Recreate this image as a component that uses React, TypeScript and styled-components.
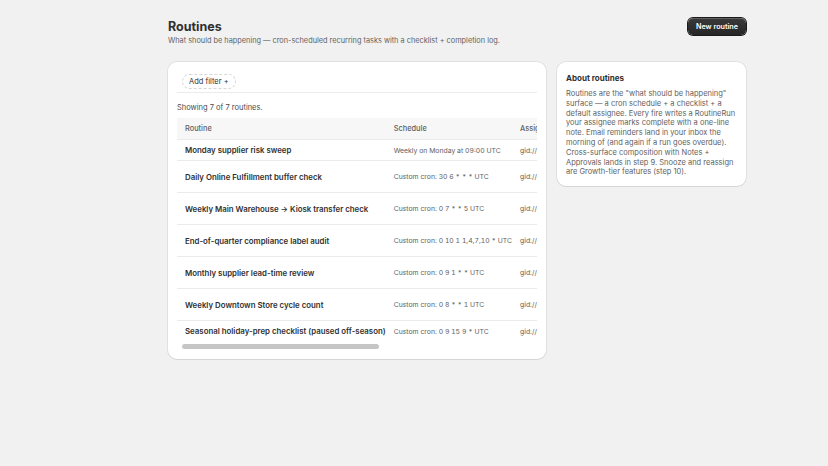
import React from "react"
import styled, { createGlobalStyle } from "styled-components"

const GlobalStyle = createGlobalStyle`
  body {
    margin: 0;
    background: #f1f1f1;
    font-family: Inter, "Noto Sans", sans-serif;
    color: #303030;
  }
`

const Shell = styled.div`
  padding: 18px 0 40px 86px;
`

const Page = styled.div`
  max-width: 578px;
  margin: 0 auto;
`

const Header = styled.header`
  display: flex;
  justify-content: space-between;
  align-items: flex-start;
  margin-bottom: 16px;
`

const Title = styled.h1`
  margin: 0;
  font-size: 12.5px;
  line-height: 18px;
  font-weight: 700;
  color: #303030;
`

const Subtitle = styled.p`
  margin: 0;
  font-size: 7.35px;
  line-height: 10px;
  color: #616161;
`

const PrimaryButton = styled.button`
  height: 17px;
  padding: 0 8px;
  border: none;
  border-radius: 5px;
  background: linear-gradient(#3a3a3a, #262626);
  box-shadow: 0 0 0 1px #1a1a1a, inset 0 1px 0 rgba(255, 255, 255, 0.2);
  color: #fff;
  font-family: inherit;
  font-size: 7.2px;
  font-weight: 600;
  cursor: pointer;
`

const Layout = styled.div`
  display: grid;
  grid-template-columns: minmax(0, 2fr) minmax(0, 1fr);
  gap: 11px;
  align-items: start;
`

const Card = styled.section`
  min-width: 0;
  background: #fff;
  border-radius: 9px;
  box-shadow: 0 0 0 1px rgba(0, 0, 0, 0.06), 0 1px 1px rgba(0, 0, 0, 0.06);
  padding: 9px;
`

const FilterBar = styled.div`
  display: flex;
  align-items: center;
  padding: 3px 5px;
  border-bottom: 1px solid #ebebeb;
`

const AddFilter = styled.button`
  height: 15px;
  padding: 0 6px;
  border: 1px dashed #d6d6d6;
  border-radius: 8px;
  background: #fff;
  font-family: inherit;
  font-size: 7.5px;
  color: #303030;
`

const Count = styled.p`
  margin: 10px 0 5px;
  font-size: 7.5px;
  line-height: 10px;
  color: #4a4a4a;
`

const TableWrap = styled.div`
  overflow: hidden;
`

const Table = styled.table`
  border-collapse: collapse;
  white-space: nowrap;
  font-size: 6.85px;
  font-variant-numeric: tabular-nums;
`

const Th = styled.th`
  height: 21px;
  padding: 0 4px;
  background: #f7f7f7;
  text-align: left;
  font-size: 7.4px;
  font-weight: 500;
  color: #616161;
  border-bottom: 1px solid #ebebeb;
  &:first-child {
    padding-left: 8px;
  }
`

const Row = styled.tr<{ $tall?: boolean; $last?: boolean }>`
  height: ${(p) => (p.$tall ? 32 : 21)}px;
  border-bottom: ${(p) => (p.$last ? "none" : "1px solid #ebebeb")};
`

const NameCell = styled.td`
  padding: 0 4px 0 8px;
  font-size: 7.85px;
  font-weight: 600;
  font-variant-numeric: normal;
  color: #303030;
`

const Cell = styled.td`
  padding: 0 4px;
  color: #616161;
`

const ScrollThumb = styled.div`
  width: 197px;
  height: 5px;
  margin: 2px 0 1px 5px;
  border-radius: 3px;
  background: #c6c6c6;
`

const SideTitle = styled.h2`
  margin: 1px 0 0;
  font-size: 8px;
  line-height: 12px;
  font-weight: 700;
  color: #303030;
`

const SideText = styled.p`
  margin: 5px 0 0;
  font-size: 7.5px;
  line-height: 9.8px;
  color: #616161;
`

interface Routine {
  name: string
  schedule: string
  assignee: string
  checklist: number
  next: string
}

const routines: Routine[] = [
  { name: "Monday supplier risk sweep", schedule: "Weekly on Monday at 09:00 UTC", assignee: "gid://shopify/StaffMember/1", checklist: 4, next: "Mon 09:00" },
  { name: "Daily Online Fulfillment buffer check", schedule: "Custom cron: 30 6 * * * UTC", assignee: "gid://shopify/StaffMember/2", checklist: 3, next: "Tomorrow 06:30" },
  { name: "Weekly Main Warehouse → Kiosk transfer check", schedule: "Custom cron: 0 7 * * 5 UTC", assignee: "gid://shopify/StaffMember/3", checklist: 5, next: "Fri 07:00" },
  { name: "End-of-quarter compliance label audit", schedule: "Custom cron: 0 10 1 1,4,7,10 * UTC", assignee: "gid://shopify/StaffMember/1", checklist: 6, next: "Oct 1 10:00" },
  { name: "Monthly supplier lead-time review", schedule: "Custom cron: 0 9 1 * * UTC", assignee: "gid://shopify/StaffMember/4", checklist: 3, next: "1st 09:00" },
  { name: "Weekly Downtown Store cycle count", schedule: "Custom cron: 0 8 * * 1 UTC", assignee: "gid://shopify/StaffMember/5", checklist: 4, next: "Mon 08:00" },
  { name: "Seasonal holiday-prep checklist (paused off-season)", schedule: "Custom cron: 0 9 15 9 * UTC", assignee: "gid://shopify/StaffMember/2", checklist: 8, next: "Paused" },
]

const App = () => {
  return (
    <Shell>
      <GlobalStyle />
      <Page>
        <Header>
          <div>
            <Title>Routines</Title>
            <Subtitle>What should be happening — cron-scheduled recurring tasks with a checklist + completion log.</Subtitle>
          </div>
          <PrimaryButton>New routine</PrimaryButton>
        </Header>
        <Layout>
          <Card>
            <FilterBar>
              <AddFilter>Add filter +</AddFilter>
            </FilterBar>
            <Count>Showing 7 of 7 routines.</Count>
            <TableWrap>
              <Table>
                <thead>
                  <tr>
                    <Th>Routine</Th>
                    <Th>Schedule</Th>
                    <Th>Assignee</Th>
                    <Th>Checklist</Th>
                    <Th>Next run</Th>
                  </tr>
                </thead>
                <tbody>
                  {routines.map((r, i) => (
                    <Row key={r.name} $tall={i > 0 && i < routines.length - 1} $last={i === routines.length - 1}>
                      <NameCell>{r.name}</NameCell>
                      <Cell>{r.schedule}</Cell>
                      <Cell>{r.assignee}</Cell>
                      <Cell>{r.checklist} items</Cell>
                      <Cell>{r.next}</Cell>
                    </Row>
                  ))}
                </tbody>
              </Table>
            </TableWrap>
            <ScrollThumb />
          </Card>
          <Card>
            <SideTitle>About routines</SideTitle>
            <SideText>
              Routines are the "what should be happening" surface — a cron schedule + a checklist + a default assignee. Every fire writes a RoutineRun your assignee marks complete with a one-line note. Email reminders land in your inbox the morning of (and again if a run goes overdue). Cross-surface composition with Notes + Approvals lands in step 9. Snooze and reassign are Growth-tier features (step 10).
            </SideText>
          </Card>
        </Layout>
      </Page>
    </Shell>
  )
}

export default App
